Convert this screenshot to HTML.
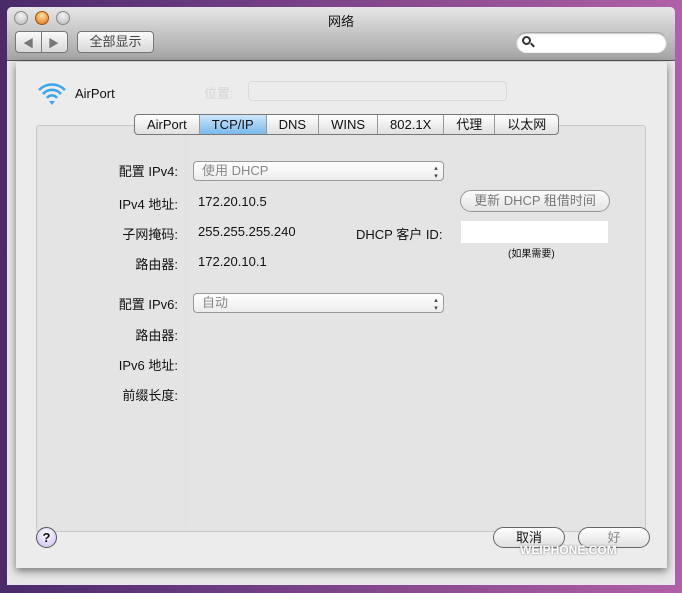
<!DOCTYPE html><html><head><meta charset="utf-8"><style>
*{box-sizing:border-box;margin:0;padding:0}
body{width:682px;height:593px;overflow:hidden;position:relative;background:linear-gradient(90deg,#4a2a6a 0%,#6a3a80 30%,#8a4a90 60%,#b060a8 100%);font-family:"Liberation Sans","Noto Sans CJK SC",sans-serif;font-size:13px;color:#111}
.a{position:absolute}
.win{left:7px;top:7px;width:668px;height:578px;background:#e8e8e8;border-radius:5px 5px 0 0}
.tb{left:7px;top:7px;width:668px;height:54px;background:linear-gradient(#e6e6e6,#a4a4a4);border-radius:5px 5px 0 0;border-bottom:1px solid #555}
.dot{width:14px;height:14px;border-radius:50%;background:radial-gradient(circle at 50% 30%,#f4f4f4,#b8b8b8);border:1px solid #8a8a8a}
.btn{background:linear-gradient(#fafafa,#d8d8d8);border:1px solid #777;border-radius:4px}
.sheet{left:16px;top:62px;width:651px;height:506px;background:#ececec;box-shadow:0 3px 8px rgba(0,0,0,.5)}
.box{left:36px;top:125px;width:610px;height:407px;background:#e4e4e4;border:1px solid #c8c8c8;border-radius:3px}
.lab{text-align:right;width:120px;left:58px}
.sel{height:20px;border:1px solid #999;border-radius:4px;background:linear-gradient(#fff,#ececec);color:#888;padding-left:8px;line-height:18px}
.sel:after{content:"▴▾";position:absolute;right:4px;top:2px;font-size:7px;writing-mode:vertical-lr;color:#444;line-height:7px}
.tabs{left:134px;top:114px;height:21px;border:1px solid #777;border-radius:4px;background:linear-gradient(#fff,#e0e0e0);display:flex;overflow:hidden}
.tabs div{padding:0 12px;line-height:19px;border-left:1px solid #999}
.tabs div:first-child{border-left:none}
.ghost{color:#d6d6d6}
</style></head><body>
<div class="a win"></div>
<div class="a tb"></div>
<div class="a dot" style="left:14px;top:11px"></div>
<div class="a dot" style="left:35px;top:11px;background:radial-gradient(circle at 50% 30%,#ffe0a0,#e07010);border-color:#a05010"></div>
<div class="a dot" style="left:56px;top:11px"></div>
<div class="a" style="left:0;top:11px;width:682px;text-align:center;font-size:13px">网络</div>
<div class="a btn" style="left:15px;top:31px;width:53px;height:22px"><div class="a" style="left:25px;top:0;height:20px;border-left:1px solid #777"></div><div class="a" style="left:7px;top:3px;color:#777;font-size:11px">◀</div><div class="a" style="left:32px;top:3px;color:#777;font-size:11px">▶</div></div>
<div class="a btn" style="left:77px;top:31px;width:77px;height:22px;text-align:center;line-height:20px;color:#444">全部显示</div>
<div class="a" style="left:516px;top:32px;width:151px;height:21px;background:#fff;border-radius:11px;box-shadow:inset 0 1px 2px #777"><div class="a" style="left:6px;top:4px;width:9px;height:9px;border:2px solid #333;border-radius:50%"></div><div class="a" style="left:14px;top:12px;width:5px;height:2px;background:#333;transform:rotate(45deg)"></div></div>
<div class="a sheet"></div>
<svg class="a" style="left:36px;top:80px" width="32" height="28"><g fill="none" stroke="#3aa4ee" stroke-width="2.5"><path d="M3 10 A18 18 0 0 1 29 10"/><path d="M7 14 A12 12 0 0 1 25 14"/><path d="M11 18 A6 6 0 0 1 21 18"/></g><path d="M13 21 L16 25 L19 21Z" fill="#3aa4ee"/></svg>
<div class="a" style="left:75px;top:86px">AirPort</div>
<div class="a ghost" style="left:204px;top:83px">位置:</div>
<div class="a" style="left:248px;top:81px;width:259px;height:20px;border:1px solid #dadada;border-radius:4px"></div>
<div class="a box"></div>
<div class="a" style="left:26px;top:125px;width:160px;height:400px;border-right:1px solid #e0e0e0"></div>
<div class="a tabs"><div>AirPort</div><div style="background:linear-gradient(#cfe6fb,#7ab8ec)">TCP/IP</div><div>DNS</div><div>WINS</div><div>802.1X</div><div>代理</div><div>以太网</div></div>
<div class="a lab" style="top:161px">配置 IPv4:</div>
<div class="a sel" style="left:193px;top:161px;width:251px">使用 DHCP</div>
<div class="a lab" style="top:194px">IPv4 地址:</div><div class="a" style="left:198px;top:194px">172.20.10.5</div>
<div class="a lab" style="top:224px">子网掩码:</div><div class="a" style="left:198px;top:224px">255.255.255.240</div>
<div class="a" style="left:356px;top:224px">DHCP 客户 ID:</div>
<div class="a" style="left:461px;top:221px;width:147px;height:22px;background:#fff"></div>
<div class="a" style="left:508px;top:245px;font-size:10px">(如果需要)</div>
<div class="a" style="left:460px;top:190px;width:150px;height:22px;border:1px solid #999;border-radius:11px;background:linear-gradient(#fbfbfb,#e4e4e4);text-align:center;line-height:20px;color:#777">更新 DHCP 租借时间</div>
<div class="a lab" style="top:254px">路由器:</div><div class="a" style="left:198px;top:254px">172.20.10.1</div>
<div class="a lab" style="top:294px">配置 IPv6:</div>
<div class="a sel" style="left:193px;top:293px;width:251px">自动</div>
<div class="a lab" style="top:325px">路由器:</div>
<div class="a lab" style="top:355px">IPv6 地址:</div>
<div class="a lab" style="top:385px">前缀长度:</div>
<div class="a" style="left:36px;top:527px;width:21px;height:21px;border-radius:50%;border:1px solid #555;background:radial-gradient(circle at 50% 35%,#fff,#c8b8f0);text-align:center;font-weight:bold;line-height:19px">?</div>
<div class="a" style="left:493px;top:527px;width:72px;height:21px;border:1px solid #666;border-radius:11px;background:linear-gradient(#fff,#e0e0e0);text-align:center;line-height:19px">取消</div>
<div class="a" style="left:578px;top:527px;width:72px;height:21px;border:1px solid #666;border-radius:11px;background:linear-gradient(#fff,#e0e0e0);text-align:center;line-height:19px;color:#888">好</div>
<div class="a" style="left:520px;top:543px;font-weight:bold;font-size:12px;color:#fff;text-shadow:0 0 2px #777">WEIPHONE.COM</div>
</body></html>
